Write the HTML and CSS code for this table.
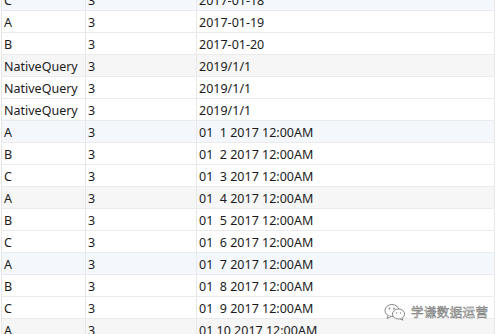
FILE: index.html
```html
<!DOCTYPE html>
<html>
<head>
<meta charset="utf-8">
<link rel="stylesheet" href="styles.css">
</head>
<body>
<div class="grid">
  <div class="row blue"><span class="c c1">C</span><span class="c c2">3</span><span class="c c3">2017-01-18</span></div>
  <div class="row"><span class="c c1">A</span><span class="c c2">3</span><span class="c c3">2017-01-19</span></div>
  <div class="row"><span class="c c1">B</span><span class="c c2">3</span><span class="c c3">2017-01-20</span></div>
  <div class="row grey"><span class="c c1">NativeQuery</span><span class="c c2">3</span><span class="c c3">2019/1/1</span></div>
  <div class="row"><span class="c c1">NativeQuery</span><span class="c c2">3</span><span class="c c3">2019/1/1</span></div>
  <div class="row"><span class="c c1">NativeQuery</span><span class="c c2">3</span><span class="c c3">2019/1/1</span></div>
  <div class="row blue"><span class="c c1">A</span><span class="c c2">3</span><span class="c c3">01  1 2017 12:00AM</span></div>
  <div class="row"><span class="c c1">B</span><span class="c c2">3</span><span class="c c3">01  2 2017 12:00AM</span></div>
  <div class="row"><span class="c c1">C</span><span class="c c2">3</span><span class="c c3">01  3 2017 12:00AM</span></div>
  <div class="row grey"><span class="c c1">A</span><span class="c c2">3</span><span class="c c3">01  4 2017 12:00AM</span></div>
  <div class="row"><span class="c c1">B</span><span class="c c2">3</span><span class="c c3">01  5 2017 12:00AM</span></div>
  <div class="row"><span class="c c1">C</span><span class="c c2">3</span><span class="c c3">01  6 2017 12:00AM</span></div>
  <div class="row blue"><span class="c c1">A</span><span class="c c2">3</span><span class="c c3">01  7 2017 12:00AM</span></div>
  <div class="row"><span class="c c1">B</span><span class="c c2">3</span><span class="c c3">01  8 2017 12:00AM</span></div>
  <div class="row"><span class="c c1">C</span><span class="c c2">3</span><span class="c c3">01  9 2017 12:00AM</span></div>
  <div class="row grey"><span class="c c1">A</span><span class="c c2">3</span><span class="c c3">01 10 2017 12:00AM</span></div>
</div>
<div class="mark">
  <svg class="wx" width="22" height="18" viewBox="0 0 22 18">
    <ellipse cx="8" cy="7.5" rx="7" ry="6" fill="#fff" stroke="#888" stroke-width="1"/>
    <path d="M4 12.5 L3 15.5 L7 13.4" fill="#fff" stroke="#888" stroke-width="1"/>
    <ellipse cx="14.5" cy="11" rx="6" ry="5" fill="#fff" stroke="#888" stroke-width="1"/>
    <path d="M18 15 L19 17.2 L16 15.8" fill="#fff" stroke="#888" stroke-width="1"/>
    <circle cx="5.5" cy="5.5" r="0.9" fill="#888"/>
    <circle cx="10" cy="5.5" r="0.9" fill="#888"/>
    <circle cx="12.5" cy="10" r="0.7" fill="#888"/>
    <circle cx="16.5" cy="10" r="0.7" fill="#888"/>
  </svg>
  <span class="mark-text">学谦数据运营</span>
</div>
</body>
</html>
```

FILE: styles.css
```css
html, body {
  margin: 0;
  padding: 0;
  background: #fff;
  overflow: hidden;
}
body {
  width: 498px;
  height: 334px;
  position: relative;
  font-family: "Noto Sans", "Noto Sans CJK SC", sans-serif;
  font-size: 12.5px;
  color: #1b1b1b;
}
.grid {
  margin-top: -11px;
  margin-left: 1px;
  width: 493px;
  border-left: 1px solid #e6e6e6;
  display: flex;
  flex-direction: column;
}
.row {
  display: grid;
  grid-template-columns: 84px 111px 298px;
  height: 21px;
  border-bottom: 1px solid #ebebeb;
  background: #fff;
}
.row.blue { background: #f4f8fc; }
.row.grey { background: #f6f6f6; }
.c {
  border-right: 1px solid #e8e8e8;
  padding-left: 2px;
  line-height: 23px;
  white-space: pre;
  overflow: hidden;
}
.mark {
  position: absolute;
  left: 384px;
  top: 302px;
  display: flex;
  align-items: center;
  gap: 5px;
}
.wx { display: block; }
.mark-text {
  font-family: "Noto Sans CJK SC", sans-serif;
  font-size: 12.5px;
  color: #fff;
  -webkit-text-stroke: 0.5px #6e6e6e;
  letter-spacing: 0.4px;
}
```
